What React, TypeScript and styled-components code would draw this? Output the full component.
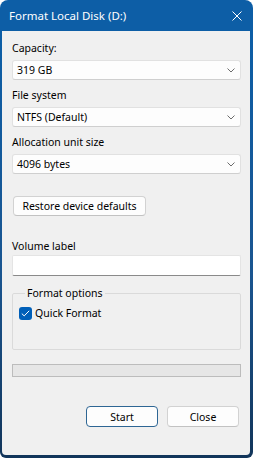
import React from 'react';
import styled, { createGlobalStyle } from 'styled-components';

const GlobalStyle = createGlobalStyle`
    html, body {
        margin: 0;
        padding: 0;
        background: #ffffff;
    }
    * {
        box-sizing: border-box;
    }
`;

const Window = styled.div`
    width: 253px;
    height: 458px;
    display: flex;
    flex-direction: column;
    background: linear-gradient(#0d5ea6 0, #0d5ea6 40px, #1a5590 60%, #12355a 100%);
    border-radius: 8px 8px 6px 6px;
    overflow: hidden;
    font-family: "Noto Sans", "Open Sans", sans-serif;
    color: #000000;
`;

const TitleBar = styled.div`
    height: 31px;
    flex: none;
    display: flex;
    align-items: center;
    justify-content: space-between;
    padding: 0 11px 0 9px;
    color: #ffffff;
    font-size: 11.5px;
`;

const CloseIcon = () => (
    <svg width="10" height="10" viewBox="0 0 10 10">
        <path d="M0.5 0.5 L9.5 9.5 M9.5 0.5 L0.5 9.5" stroke="#ffffff" strokeWidth="1" fill="none" />
    </svg>
);

const Body = styled.div`
    flex: 1;
    margin: 0 3px 3px 2px;
    background: #f0f0f0;
    border-radius: 0 0 4px 4px;
    padding: 0 9px 0 10px;
    display: flex;
    flex-direction: column;
    font-size: 10.5px;
`;

const Label = styled.div<{ $top: number }>`
    margin-top: ${({ $top }) => $top}px;
    height: 14px;
    line-height: 14px;
`;

const SelectBox = styled.div`
    margin-top: 5px;
    height: 20px;
    display: flex;
    align-items: center;
    justify-content: space-between;
    padding: 0 5px 0 4px;
    background: #fdfdfd;
    border: 1px solid #e1e1e1;
    border-bottom-color: #cfcfcf;
    border-radius: 3px;
`;

const Chevron = () => (
    <svg width="8" height="5" viewBox="0 0 8 5">
        <path d="M0.5 0.5 L4 4 L7.5 0.5" stroke="#6b6b6b" strokeWidth="1" fill="none" />
    </svg>
);

const Select = ({ value }: { value: string }) => (
    <SelectBox>
        <span>{value}</span>
        <Chevron />
    </SelectBox>
);

const Button = styled.button<{ $primary?: boolean; $width: number }>`
    width: ${({ $width }) => $width}px;
    height: 21px;
    padding: 0;
    font-family: inherit;
    font-size: 10.5px;
    color: #000000;
    background: #fdfdfd;
    border: 1px solid ${({ $primary }) => ($primary ? '#2e6694' : '#d2d2d2')};
    border-bottom-color: ${({ $primary }) => ($primary ? '#2e6694' : '#c2c2c2')};
    border-radius: 4px;
`;

const RestoreButton = styled(Button)`
    margin: 22px 0 0 1px;
    height: 20px;
`;

const TextInput = styled.div`
    margin-top: 2px;
    height: 21px;
    background: #ffffff;
    border: 1px solid #e4e4e4;
    border-bottom: 1px solid #8a8a8a;
    border-radius: 2px;
`;

const GroupBox = styled.fieldset`
    margin: 10px 0 0 0;
    height: 64px;
    padding: 6px 0 0 6px;
    border: 1px solid #dadada;
    border-radius: 2px;
    legend {
        margin-left: 6px;
        padding: 0 2px;
        line-height: 14px;
    }
`;

const CheckRow = styled.div`
    display: flex;
    align-items: center;
    gap: 3px;
    height: 14px;
`;

const CheckBox = styled.span`
    width: 13px;
    height: 13px;
    background: #005fb8;
    border-radius: 3px;
    display: flex;
    align-items: center;
    justify-content: center;
`;

const Progress = styled.div`
    margin-top: 14px;
    height: 13px;
    background: #e6e6e6;
    border: 1px solid #bcbcbc;
`;

const ButtonRow = styled.div`
    margin-top: 29px;
    display: flex;
    justify-content: flex-end;
    gap: 9px;
    padding-right: 2px;
`;

export default function App() {
    return (
        <>
            <GlobalStyle />
            <Window>
                <TitleBar>
                    <span>Format Local Disk (D:)</span>
                    <CloseIcon />
                </TitleBar>
                <Body>
                    <Label $top={10}>Capacity:</Label>
                    <Select value="319 GB" />
                    <Label $top={8}>File system</Label>
                    <Select value="NTFS (Default)" />
                    <Label $top={8}>Allocation unit size</Label>
                    <Select value="4096 bytes" />
                    <RestoreButton $width={133}>Restore device defaults</RestoreButton>
                    <Label $top={23}>Volume label</Label>
                    <TextInput />
                    <GroupBox>
                        <legend>Format options</legend>
                        <CheckRow>
                            <CheckBox>
                                <svg width="9" height="7" viewBox="0 0 9 7">
                                    <path d="M0.8 3.6 L3.2 5.9 L8.2 0.8" stroke="#ffffff" strokeWidth="1" fill="none" />
                                </svg>
                            </CheckBox>
                            <span>Quick Format</span>
                        </CheckRow>
                    </GroupBox>
                    <Progress />
                    <ButtonRow>
                        <Button $primary $width={72}>Start</Button>
                        <Button $width={72}>Close</Button>
                    </ButtonRow>
                </Body>
            </Window>
        </>
    );
}
